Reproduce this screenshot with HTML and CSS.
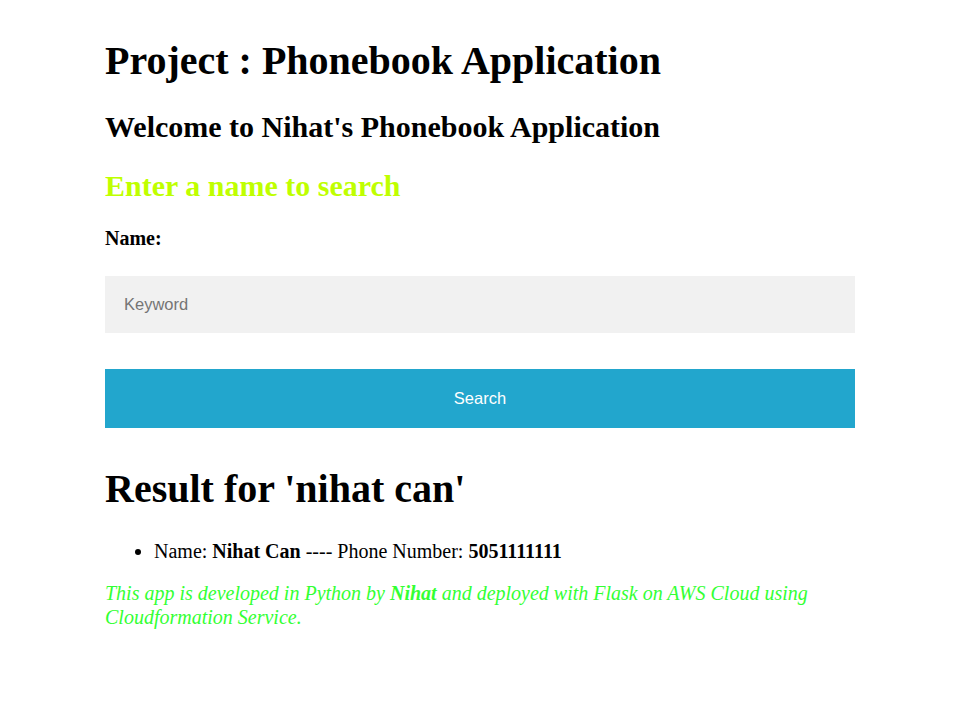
FILE: index.html
```html
<!DOCTYPE html>
<html>
<head>
<meta charset="utf-8">
<title>Phonebook</title>
<link rel="stylesheet" href="styles.css">
</head>
<body>
<div class="container">
  <h1 class="title">Project : Phonebook Application</h1>
  <h2 class="welcome">Welcome to Nihat's Phonebook Application</h2>
  <h3 class="prompt">Enter a name to search</h3>
  <form class="search-form">
    <label class="label" for="kw">Name:</label>
    <input class="input" id="kw" type="text" placeholder="Keyword">
    <button class="button" type="button">Search</button>
  </form>
  <h1 class="result-title">Result for 'nihat can'</h1>
  <ul class="results">
    <li>Name: <b>Nihat Can</b> ---- Phone Number: <b>5051111111</b></li>
  </ul>
  <p class="footer">This app is developed in Python by <b>Nihat</b> and deployed with Flask on AWS Cloud using Cloudformation Service.</p>
</div>
</body>
</html>
```
FILE: styles.css
```css
html, body {
  margin: 0;
  padding: 0;
  background: #ffffff;
}
body {
  font-family: "Liberation Serif", "Times New Roman", serif;
  color: #000;
  font-size: 20px;
  line-height: 1.15;
}
.container {
  width: 750px;
  margin-left: 105px;
  padding-top: 38px;
}
.title {
  font-size: 40px;
  line-height: 46px;
  margin: 0;
}
.welcome {
  font-size: 30px;
  line-height: 34px;
  margin: 26px 0 0;
}
.prompt {
  font-size: 30px;
  line-height: 34px;
  color: #bfff00;
  margin: 25px 0 0;
}
.search-form {
  display: flex;
  flex-direction: column;
}
.label {
  font-weight: bold;
  font-size: 20px;
  line-height: 23px;
  margin-top: 24px;
}
.input {
  margin-top: 26px;
  height: 57px;
  box-sizing: border-box;
  border: none;
  background: #f1f1f1;
  padding: 0 19px;
  font-family: "Liberation Sans", Arial, sans-serif;
  font-size: 16.5px;
  outline: none;
}
.input::placeholder {
  color: #757575;
}
.button {
  margin-top: 36px;
  height: 59px;
  border: none;
  background: #22a6cd;
  color: #fff;
  font-family: "Liberation Sans", Arial, sans-serif;
  font-size: 16.5px;
}
.result-title {
  font-size: 40px;
  line-height: 46px;
  margin: 38px 0 0;
}
.results {
  margin: 28px 0 0;
  padding-left: 49px;
}
.results li {
  font-size: 20px;
  line-height: 23px;
}
.footer {
  color: #33ff33;
  font-style: italic;
  font-size: 20px;
  line-height: 24px;
  margin: 18px 0 0;
}
```
